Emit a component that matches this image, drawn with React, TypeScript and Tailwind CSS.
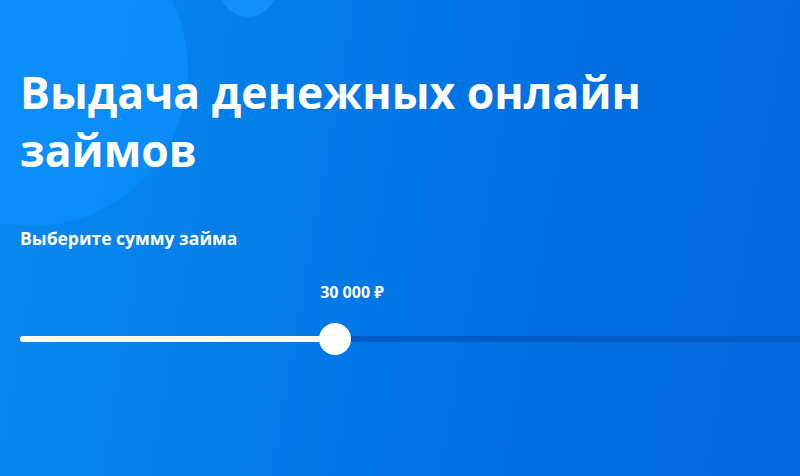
import { useState } from "react";

// Loan amount picker hero block
export default function App() {
  const [amount] = useState(30000);
  const min = 0;
  const max = 74250;
  const pct = ((amount - min) / (max - min)) * 100;

  return (
    <div
      className="relative w-[800px] h-[476px] overflow-hidden bg-[linear-gradient(100deg,#0a8af3_0%,#037ce8_35%,#006ce0_75%,#0069dc_100%)] text-white"
      style={{ fontFamily: '"Open Sans", "Noto Sans", sans-serif' }}
    >
      {/* decorative circles */}
      <div className="absolute -left-[124px] -top-[86px] w-[312px] h-[312px] rounded-full bg-[#0d93ff]/60" />
      <div className="absolute left-[220px] -top-[39px] w-[56px] h-[56px] rounded-full bg-[#1a97ff]/70" />

      <div className="relative flex flex-col pl-[20px] pt-[63px]">
        <h1 className="text-[44.5px] leading-[58px] font-bold">
          Выдача денежных онлайн
          <br />
          займов
        </h1>

        <p className="mt-[47px] text-[17.5px] leading-[24px] font-bold">Выберите сумму займа</p>

        <div className="mt-[32px] flex flex-col w-[780px]">
          {/* current value, follows the thumb */}
          <div className="flex h-[20px]">
            <div className="shrink-0" style={{ width: `${pct}%` }} />
            <span className="-ml-[15px] text-[16px] leading-[20px] font-bold whitespace-nowrap">30 000 ₽</span>
          </div>

          {/* track */}
          <div className="mt-[21px] flex items-center h-[32px]">
            <div className="shrink-0 h-[6px] rounded-l-full bg-white" style={{ width: `${pct}%` }} />
            <div className="relative z-10 shrink-0 -ml-[16px] w-[32px] h-[32px] rounded-full bg-white" />
            <div className="flex-1 -ml-[16px] h-[6px] bg-[#005cc2]" />
          </div>
        </div>
      </div>
    </div>
  );
}
